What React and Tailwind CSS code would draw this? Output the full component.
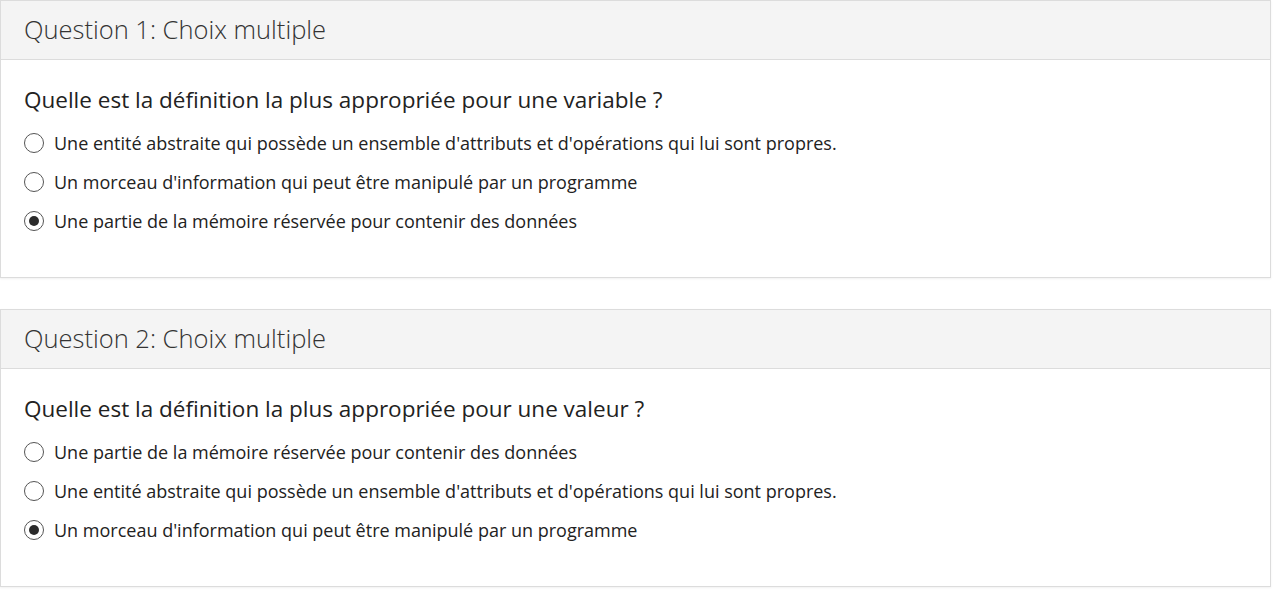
import React from "react";

const questions = [
  {
    title: "Question 1: Choix multiple",
    text: "Quelle est la définition la plus appropriée pour une variable ?",
    options: [
      "Une entité abstraite qui possède un ensemble d'attributs et d'opérations qui lui sont propres.",
      "Un morceau d'information qui peut être manipulé par un programme",
      "Une partie de la mémoire réservée pour contenir des données",
    ],
    selected: 2,
  },
  {
    title: "Question 2: Choix multiple",
    text: "Quelle est la définition la plus appropriée pour une valeur ?",
    options: [
      "Une partie de la mémoire réservée pour contenir des données",
      "Une entité abstraite qui possède un ensemble d'attributs et d'opérations qui lui sont propres.",
      "Un morceau d'information qui peut être manipulé par un programme",
    ],
    selected: 2,
  },
];

function Radio({ checked }) {
  return (
    <span className="flex h-[20px] w-[20px] shrink-0 items-center justify-center rounded-full border-[1.5px] border-[#555] bg-white">
      {checked && <span className="h-[10px] w-[10px] rounded-full bg-[#2a2a2a]" />}
    </span>
  );
}

function Card({ q }) {
  return (
    <div className="w-[1271px] border border-[#dcdcdc] bg-white shadow-[0_1px_2px_rgba(0,0,0,0.06)]">
      <div className="flex h-[59px] items-center border-b border-[#dcdcdc] bg-[#f4f4f4] px-[23px]">
        <h2 className="text-[25.5px] font-light leading-none text-[#333]">{q.title}</h2>
      </div>
      <div className="px-[23px] pt-[25px] pb-[44px]">
        <p className="text-[22.5px] leading-[30px] text-[#222]">{q.text}</p>
        <div className="mt-[16px] flex flex-col gap-[15px]">
          {q.options.map((o, i) => (
            <label key={i} className="flex h-[24px] items-center gap-[10px]">
              <Radio checked={i === q.selected} />
              <span className="text-[18px] leading-[24px] text-[#222]">{o}</span>
            </label>
          ))}
        </div>
      </div>
    </div>
  );
}

export default function App() {
  return (
    <div className="flex min-h-[597px] flex-col gap-[31px] bg-white font-['Open_Sans',sans-serif]">
      {questions.map((q, i) => (
        <Card key={i} q={q} />
      ))}
    </div>
  );
}
